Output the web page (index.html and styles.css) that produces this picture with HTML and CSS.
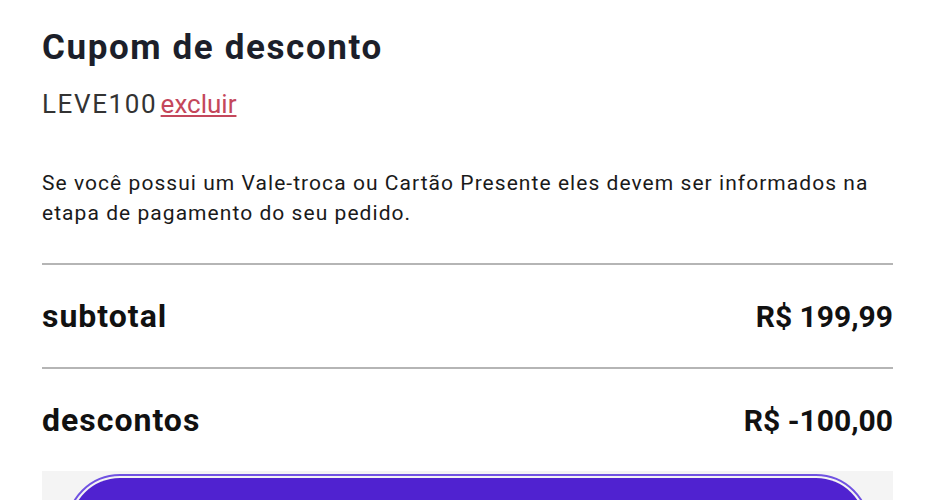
FILE: index.html
```html
<!DOCTYPE html>
<html lang="pt-BR">

<head>
    <meta charset="UTF-8">
    <meta name="viewport" content="width=device-width, initial-scale=1.0">
    <title>Carrinho - Resumo</title>
    <link rel="stylesheet" href="styles.css">
</head>

<body>
    <div class="resumo">
        <section class="cupom">
            <h2>Cupom de desconto</h2>
            <p class="cupom-codigo"><span class="codigo">LEVE100</span> <a href="#" class="cupom-excluir">excluir</a></p>
            <p class="cupom-aviso">Se você possui um Vale-troca ou Cartão Presente eles devem ser informados na etapa de pagamento do seu pedido.</p>
        </section>

        <div class="linha">
            <span class="linha-nome">subtotal</span>
            <span class="linha-valor">R$ 199,99</span>
        </div>
        <div class="linha">
            <span class="linha-nome">descontos</span>
            <span class="linha-valor">R$ -100,00</span>
        </div>

        <div class="finalizar">
            <button class="btn-finalizar">finalizar compra</button>
        </div>
    </div>
</body>

</html>
```

FILE: styles.css
```css
* {
    margin: 0;
    padding: 0;
    box-sizing: border-box;
}

body {
    font-family: Roboto, "Liberation Sans", sans-serif;
    color: #1a1a1a;
    background: #fff;
}

.resumo {
    margin: 0 50px 0 42px;
    padding-top: 26px;
}

.cupom h2 {
    font-size: 35px;
    font-weight: 700;
    line-height: 44px;
    letter-spacing: 1.6px;
    color: #1c1f2a;
}

.cupom-codigo {
    margin-top: 18px;
    font-size: 26px;
    line-height: 32px;
    color: #333;
}

.codigo {
    letter-spacing: 1.6px;
}

.cupom-excluir {
    margin-left: -3px;
    color: #c4475b;
    text-decoration: underline;
}

.cupom-aviso {
    margin-top: 48px;
    padding-bottom: 35px;
    font-size: 21px;
    line-height: 30px;
    letter-spacing: 1.05px;
    color: #1a1a1a;
}

.linha {
    display: flex;
    justify-content: space-between;
    align-items: center;
    height: 104px;
    border-top: 2px solid #b5b5b5;
    color: #111;
    font-weight: 700;
}

.linha-nome {
    font-size: 32px;
    letter-spacing: 1px;
}

.linha-valor {
    font-size: 30px;
}

.finalizar {
    background: #f4f4f4;
    padding: 7px 27px 0 28px;
}

.btn-finalizar {
    display: block;
    width: 100%;
    height: 100px;
    border: none;
    border-radius: 50px;
    background: #5022d0;
    color: #fff;
    font-family: inherit;
    font-size: 28px;
    font-weight: 700;
    outline: 2px solid #7052e2;
    outline-offset: 2px;
    cursor: pointer;
}
```
